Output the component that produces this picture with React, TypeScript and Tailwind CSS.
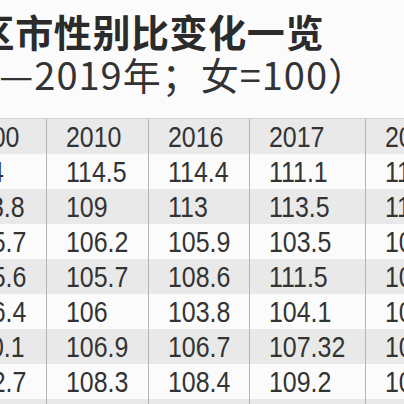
const header = ["2000", "2010", "2016", "2017", "2018"];

const rows = [
  ["114", "114.5", "114.4", "111.1", "111.3"],
  ["113.8", "109", "113", "113.5", "112.6"],
  ["105.7", "106.2", "105.9", "103.5", "104.2"],
  ["105.6", "105.7", "108.6", "111.5", "108.1"],
  ["106.4", "106", "103.8", "104.1", "103.7"],
  ["110.1", "106.9", "106.7", "107.32", "106.5"],
  ["102.7", "108.3", "108.4", "109.2", "108.8"],
  ["104.3", "105.1", "106.2", "105.8", "105.4"],
];

const colWidths = ["w-[101px]", "w-[102px]", "w-[101px]", "w-[116px]", "w-[110px]"];

function Row({ cells, shaded }: { cells: string[]; shaded: boolean }) {
  return (
    <div className={`flex h-[35px] ${shaded ? "bg-[#e9e9e9]" : "bg-[#fbfbfb]"}`}>
      {cells.map((c, i) => (
        <div
          key={i}
          className={`${colWidths[i]} shrink-0 pl-[19px] pt-[1px] leading-[35px] ${
            i > 0 ? "border-l border-[#b4b4b4]" : ""
          }`}
        >
          <span className="inline-block origin-left scale-x-[0.86] whitespace-nowrap">{c}</span>
        </div>
      ))}
    </div>
  );
}

export default function App() {
  return (
    <div className="w-[404px] h-[404px] overflow-hidden bg-[#fbfbfb] text-[#333]">
      <div
        className="pt-[9px] text-[38px] leading-[43px] whitespace-nowrap"
        style={{ fontFamily: '"Noto Sans CJK SC", "Noto Sans", sans-serif' }}
      >
        <div className="ml-[-62px] font-bold tracking-[0.6px] text-[#2b2b2b]">各区市性别比变化一览</div>
        <div className="ml-[-128px] tracking-[1px] text-[#333]">（2000—2019年；女=100）</div>
      </div>

      <div
        className="mt-[23px] ml-[-55px] border-t border-[#d4d4d4] text-[29px]"
        style={{ fontFamily: '"Liberation Sans", Arial, sans-serif' }}
      >
        <Row cells={header} shaded />
        {rows.map((r, i) => (
          <Row key={i} cells={r} shaded={i % 2 === 1} />
        ))}
      </div>
    </div>
  );
}
